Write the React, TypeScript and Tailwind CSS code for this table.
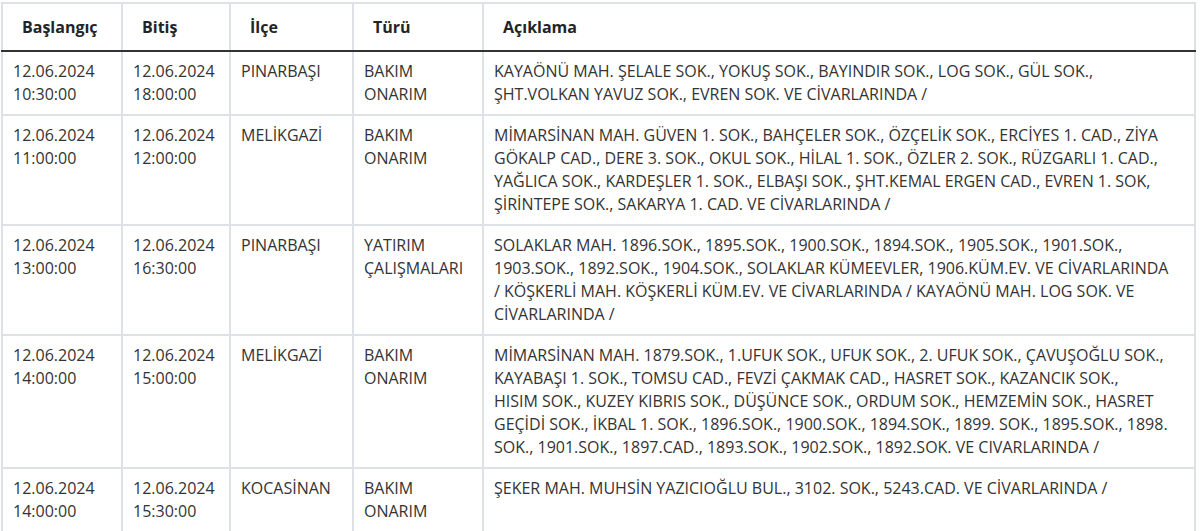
import React from "react";

type Row = {
  start: [string, string];
  end: [string, string];
  ilce: string;
  turu: string[];
  desc: string[];
};

const rows: Row[] = [
  {
    start: ["12.06.2024", "10:30:00"],
    end: ["12.06.2024", "18:00:00"],
    ilce: "PINARBAŞI",
    turu: ["BAKIM", "ONARIM"],
    desc: [
      "KAYAÖNÜ MAH. ŞELALE SOK., YOKUŞ SOK., BAYINDIR SOK., LOG SOK., GÜL SOK.,",
      "ŞHT.VOLKAN YAVUZ SOK., EVREN SOK. VE CİVARLARINDA /",
    ],
  },
  {
    start: ["12.06.2024", "11:00:00"],
    end: ["12.06.2024", "12:00:00"],
    ilce: "MELİKGAZİ",
    turu: ["BAKIM", "ONARIM"],
    desc: [
      "MİMARSİNAN MAH. GÜVEN 1. SOK., BAHÇELER SOK., ÖZÇELİK SOK., ERCİYES 1. CAD., ZİYA",
      "GÖKALP CAD., DERE 3. SOK., OKUL SOK., HİLAL 1. SOK., ÖZLER 2. SOK., RÜZGARLI 1. CAD.,",
      "YAĞLICA SOK., KARDEŞLER 1. SOK., ELBAŞI SOK., ŞHT.KEMAL ERGEN CAD., EVREN 1. SOK,",
      "ŞİRİNTEPE SOK., SAKARYA 1. CAD. VE CİVARLARINDA /",
    ],
  },
  {
    start: ["12.06.2024", "13:00:00"],
    end: ["12.06.2024", "16:30:00"],
    ilce: "PINARBAŞI",
    turu: ["YATIRIM", "ÇALIŞMALARI"],
    desc: [
      "SOLAKLAR MAH. 1896.SOK., 1895.SOK., 1900.SOK., 1894.SOK., 1905.SOK., 1901.SOK.,",
      "1903.SOK., 1892.SOK., 1904.SOK., SOLAKLAR KÜMEEVLER, 1906.KÜM.EV. VE CİVARLARINDA",
      "/ KÖŞKERLİ MAH. KÖŞKERLİ KÜM.EV. VE CİVARLARINDA / KAYAÖNÜ MAH. LOG SOK. VE",
      "CİVARLARINDA /",
    ],
  },
  {
    start: ["12.06.2024", "14:00:00"],
    end: ["12.06.2024", "15:00:00"],
    ilce: "MELİKGAZİ",
    turu: ["BAKIM", "ONARIM"],
    desc: [
      "MİMARSİNAN MAH. 1879.SOK., 1.UFUK SOK., UFUK SOK., 2. UFUK SOK., ÇAVUŞOĞLU SOK.,",
      "KAYABAŞI 1. SOK., TOMSU CAD., FEVZİ ÇAKMAK CAD., HASRET SOK., KAZANCIK SOK.,",
      "HISIM SOK., KUZEY KIBRIS SOK., DÜŞÜNCE SOK., ORDUM SOK., HEMZEMİN SOK., HASRET",
      "GEÇİDİ SOK., İKBAL 1. SOK., 1896.SOK., 1900.SOK., 1894.SOK., 1899. SOK., 1895.SOK., 1898.",
      "SOK., 1901.SOK., 1897.CAD., 1893.SOK., 1902.SOK., 1892.SOK. VE CIVARLARINDA /",
    ],
  },
  {
    start: ["12.06.2024", "14:00:00"],
    end: ["12.06.2024", "15:30:00"],
    ilce: "KOCASİNAN",
    turu: ["BAKIM", "ONARIM"],
    desc: [
      "ŞEKER MAH. MUHSİN YAZICIOĞLU BUL., 3102. SOK., 5243.CAD. VE CİVARLARINDA /",
    ],
  },
];

const td =
  "border-2 border-[#dee2e6] pl-[10px] pr-3 py-2 align-top text-left font-normal";
const th =
  "border-2 border-[#dee2e6] border-b-[#333333] pl-[19px] pr-3 py-3 text-left font-bold text-[#212529] leading-[22px]";

function Lines({ items }: { items: string[] }) {
  return (
    <>
      {items.map((l, i) => (
        <span key={i} className="block whitespace-nowrap">
          {l}
        </span>
      ))}
    </>
  );
}

export default function App() {
  return (
    <div className="bg-white w-[1200px] h-[531px] overflow-hidden pl-[1px] pt-[2px]">
      <table className="table-fixed border-collapse w-[1195px] font-['Open_Sans','Noto_Sans',sans-serif] text-[16px] leading-[23px] text-[#333333]">
        <colgroup>
          <col className="w-[120px]" />
          <col className="w-[108px]" />
          <col className="w-[123px]" />
          <col className="w-[130px]" />
          <col />
        </colgroup>
        <thead>
          <tr>
            <th className={th}>Başlangıç</th>
            <th className={th}>Bitiş</th>
            <th className={th}>İlçe</th>
            <th className={th}>Türü</th>
            <th className={th}>Açıklama</th>
          </tr>
        </thead>
        <tbody>
          {rows.map((r, i) => (
            <tr key={i}>
              <td className={td}>
                <Lines items={r.start} />
              </td>
              <td className={td}>
                <Lines items={r.end} />
              </td>
              <td className={td}>{r.ilce}</td>
              <td className={td}>
                <Lines items={r.turu} />
              </td>
              <td className={td}>
                <Lines items={r.desc} />
              </td>
            </tr>
          ))}
        </tbody>
      </table>
    </div>
  );
}
